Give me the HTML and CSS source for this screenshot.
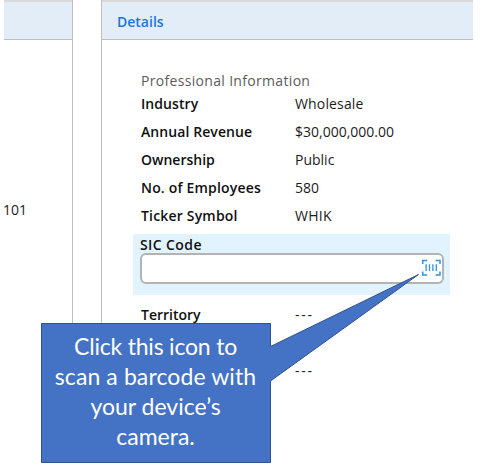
FILE: index.html
```html
<!DOCTYPE html>
<html lang="en">
<head>
<meta charset="utf-8">
<title>Account details</title>
<link rel="stylesheet" href="styles.css">
</head>
<body>
<div class="page">
  <section class="panel panel-left">
    <header class="panel-head"></header>
    <div class="address">101</div>
  </section>
  <section class="panel panel-details">
    <header class="panel-head"><span class="title">Details</span></header>
    <div class="panel-body">
      <h2 class="group">Professional Information</h2>
      <div class="row"><b class="w-industry">Industry</b><span class="w-whole">Wholesale</span></div>
      <div class="row"><b class="w-revenue">Annual Revenue</b><span>$30,000,000.00</span></div>
      <div class="row"><b>Ownership</b><span>Public</span></div>
      <div class="row"><b class="w-employees">No. of Employees</b><span>580</span></div>
      <div class="row"><b class="w-ticker">Ticker Symbol</b><span class="w-whik">WHIK</span></div>
      <div class="edit">
        <label class="w-sic">SIC Code</label>
        <div class="field">
          <svg class="barcode" width="20" height="18" viewBox="0 0 20 18" fill="none" stroke="#2f92e2" stroke-width="1.5">
            <path d="M.75 5V1.5H5.2M13.6 1.5H18V5M18 12.5V16H13.6M5.2 16H.75V12.5"/>
            <path stroke-width="1.3" d="M4.1 5.2V12M7.5 5.2V12M10.9 5.2V12M14.3 5.2V12"/>
          </svg>
        </div>
      </div>
      <div class="row"><b>Territory</b><span class="dash">---</span></div>
      <div class="row"><b></b><span></span></div>
      <div class="row"><b></b><span class="dash">---</span></div>
    </div>
  </section>
</div>
<div class="callout">
  <svg class="callout-shape" width="400" height="200" viewBox="0 0 400 200">
    <path d="M.5 53.5H229.5V76.5L377.5 4.5L229.5 111V192.5H.5Z" fill="#4472c4" stroke="#2f528f"/>
  </svg>
  <div class="callout-text">
    <span class="c1">Click this icon to</span>
    <span class="c2">scan a barcode with</span>
    <span class="c3">your device’s</span>
    <span class="c4">camera.</span>
  </div>
</div>
</body>
</html>
```
FILE: styles.css
```css
* { box-sizing: border-box; }
body {
  margin: 0;
  background: #fff;
  color: #1c1c1c;
  font: 14px/20px "Open Sans", "Noto Sans", sans-serif;
  overflow: hidden;
}
.page {
  display: grid;
  grid-template-columns: 69px 372px;
  column-gap: 28px;
  height: 460px;
  padding-left: 4px;
}
.panel { border-right: 1px solid #bfbfbf; white-space: nowrap; }
.panel-details { border-right: 0; border-left: 1px solid #bfbfbf; }
.panel-head {
  height: 40px;
  padding: 10px 0 0 15px;
  background: #e3edf8;
  border-top: 2px solid #d9d9d9;
  border-bottom: 1px solid #b9c0c8;
  color: #1878dc;
  font-weight: 600;
}
.address { margin: 160px 0 0 -1px; }
.panel-body { padding: 31px 0 0 39px; }
.group {
  margin: 0;
  height: 19px;
  font-size: 14px;
  font-weight: 500;
  letter-spacing: .32px;
  color: #5c5c5c;
}
.row {
  display: grid;
  grid-template-columns: 154px 1fr;
  height: 28px;
  padding-top: 4px;
}
b { font-weight: 600; color: #101010; }
.w-industry, .w-revenue { letter-spacing: .08px; }
.w-employees, .w-ticker { letter-spacing: .18px; }
.w-whole { letter-spacing: .15px; }
.w-whik { letter-spacing: .3px; }
.dash { letter-spacing: 1.7px; }
.edit {
  width: 317px;
  height: 61px;
  margin: 4px 0 6px -8px;
  padding: 1px 7px 0;
  background: #e0f3fe;
}
.edit label {
  display: block;
  height: 18px;
  font-weight: 600;
  letter-spacing: .4px;
  color: #101010;
}
.field {
  display: flex;
  justify-content: flex-end;
  width: 304px;
  height: 31px;
  padding: 4px 0 0;
  background: #fff;
  border: 2px solid #b3b3b3;
  border-radius: 6px;
}
.callout { position: absolute; left: 41px; top: 270px; width: 400px; height: 196px; }
.callout-shape { position: absolute; left: 0; top: 0; }
.callout-text {
  position: relative;
  display: flex;
  flex-direction: column;
  align-items: center;
  width: 229px;
  padding-top: 61px;
  color: #fff;
  font: 23px/30px Lato, "Noto Sans", sans-serif;
  white-space: nowrap;
}
.c1 { letter-spacing: -.2px; }
.c2 { letter-spacing: .1px; }
```
